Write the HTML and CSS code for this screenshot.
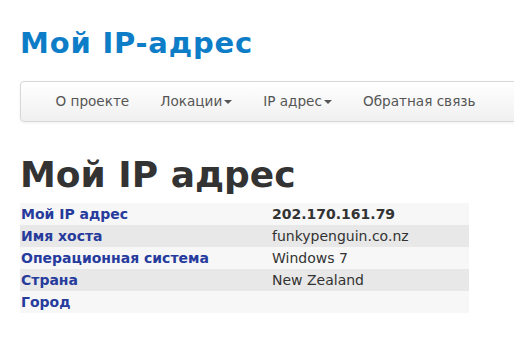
FILE: index.html
```html
<!DOCTYPE html>
<html lang="ru">
<head>
    <meta charset="UTF-8">
    <meta name="viewport" content="width=device-width, initial-scale=1.0">
    <title>Мой IP-адрес</title>
    <link rel="stylesheet" href="styles.css">
</head>
<body>
<header>
    <a class="brand" href="#">Мой IP-адрес</a>
</header>

<nav class="navbar">
    <ul class="nav">
        <li><a href="#">О проекте</a></li>
        <li><a href="#">Локации<span class="caret"></span></a></li>
        <li><a href="#">IP адрес<span class="caret"></span></a></li>
        <li><a href="#">Обратная связь</a></li>
    </ul>
</nav>

<main>
    <h1>Мой IP адрес</h1>
    <table class="ip-table">
        <tr>
            <th>Мой IP адрес</th>
            <td><strong>202.170.161.79</strong></td>
        </tr>
        <tr>
            <th>Имя хоста</th>
            <td>funkypenguin.co.nz</td>
        </tr>
        <tr>
            <th>Операционная система</th>
            <td>Windows 7</td>
        </tr>
        <tr>
            <th>Страна</th>
            <td>New Zealand</td>
        </tr>
        <tr>
            <th>Город</th>
            <td></td>
        </tr>
    </table>
</main>
</body>
</html>
```

FILE: styles.css
```css
* {
    margin: 0;
    padding: 0;
    box-sizing: border-box;
}

body {
    font-family: "DejaVu Sans", Verdana, sans-serif;
    background-color: #fff;
    color: #333;
    padding: 0 0 0 20px;
    overflow: hidden;
}

header {
    padding-top: 26px;
    height: 81px;
}

.brand {
    font-size: 29px;
    font-weight: bold;
    letter-spacing: 0.8px;
    color: #0e7dc7;
    text-decoration: none;
}

.navbar {
    width: calc(100% + 10px);
    height: 41px;
    border: 1px solid #d8d8d8;
    border-radius: 4px;
    background: linear-gradient(#ffffff, #f0f0f0);
    box-shadow: 0 1px 3px rgba(0, 0, 0, 0.06);
}

.nav {
    list-style: none;
    display: flex;
    padding-left: 19px;
}

.nav a {
    display: block;
    padding: 11px 15.5px 0 15.5px;
    height: 39px;
    font-size: 13.6px;
    color: #555;
    text-decoration: none;
}

.caret {
    display: inline-block;
    margin-left: 2px;
    vertical-align: middle;
    border-top: 4px solid #555;
    border-left: 4px solid transparent;
    border-right: 4px solid transparent;
}

main {
    padding-top: 31px;
}

h1 {
    font-size: 36px;
    font-weight: bold;
    color: #333;
    line-height: 44px;
    margin-bottom: 6px;
}

.ip-table {
    width: 449px;
    border-collapse: collapse;
    font-size: 14px;
}

.ip-table tr:nth-child(odd) {
    background-color: #f7f7f7;
}

.ip-table tr:nth-child(even) {
    background-color: #e8e8e8;
}

.ip-table th {
    width: 252px;
    height: 22px;
    padding: 0 1px;
    text-align: left;
    color: #263b9c;
}

.ip-table td {
    padding: 0;
    color: #333;
}
```
